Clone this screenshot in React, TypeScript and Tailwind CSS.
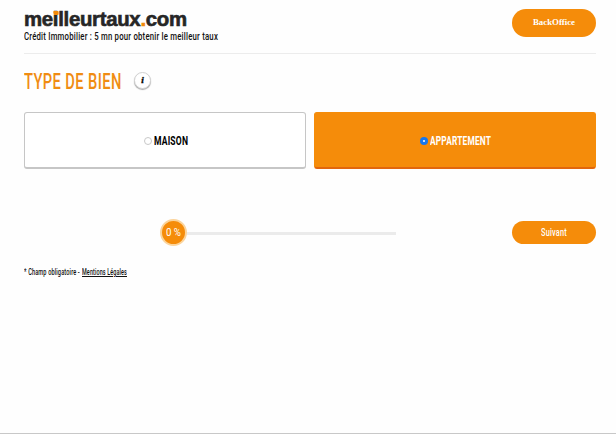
import { useLayoutEffect, useRef, useState, type ReactNode } from "react";

// Squeezes its text horizontally so that it fills the width given by `box`.
function Condensed({ box, text, children }: { box: string; text: string; children: ReactNode }) {
  const outer = useRef<HTMLSpanElement>(null);
  const inner = useRef<HTMLSpanElement>(null);
  const [scale, setScale] = useState(1);
  useLayoutEffect(() => {
    if (outer.current && inner.current) {
      setScale(outer.current.clientWidth / inner.current.offsetWidth);
    }
  }, []);
  return (
    <span ref={outer} className={`block shrink-0 ${box}`}>
      <span
        ref={inner}
        className={`block w-max origin-left whitespace-nowrap ${text}`}
        style={{ transform: `scaleX(${scale})` }}
      >
        {children}
      </span>
    </span>
  );
}

function Header() {
  return (
    <header className="flex h-[54px] items-start justify-between border-b border-[#ececec]">
      <div className="pt-[10px]">
        <Condensed
          box="w-[163px] h-[19px]"
          text="font-['Liberation_Sans',sans-serif] text-[20px] leading-[19px] font-bold tracking-[-0.3px] text-[#262626] [-webkit-text-stroke:0.6px_#262626]"
        >
          me
          <span className="relative inline-block">
            i
            <span className="absolute top-px left-[0.5px] h-[4px] w-[5px] rounded-[1px] bg-[#f28a0a]" />
          </span>
          lleurtaux<span className="text-[#f28a0a] [-webkit-text-stroke:0.6px_#f28a0a]">.</span>com
        </Condensed>
        <Condensed
          box="w-[194px] h-[14px]"
          text="font-[Roboto,sans-serif] text-[11.3px] leading-[15px] font-medium tracking-[0.3px] text-[#111]"
        >
          Crédit Immobilier : 5 mn pour obtenir le meilleur taux
        </Condensed>
      </div>
      <button className="mt-[9px] flex h-[28px] w-[84px] items-center justify-center rounded-full bg-[#f58c0a] font-['Liberation_Serif',serif] text-[8.8px] font-bold text-white">
        BackOffice
      </button>
    </header>
  );
}

function Choice({ label, box, checked }: { label: string; box: string; checked?: boolean }) {
  return (
    <label
      className={`flex h-[57px] items-center justify-center gap-[2px] rounded-[3px] border border-b-2 pt-px pl-px ${
        checked
          ? "border-[#f58c0a] border-b-[#e2660c] bg-[#f58c0a] text-white"
          : "border-[#c6c6c6] bg-white text-black"
      }`}
    >
      <span
        className={`flex size-[8px] items-center justify-center rounded-full ${
          checked ? "bg-[#1677ee]" : "border border-[#c9c9c9] bg-white"
        }`}
      >
        {checked && <span className="size-[2px] rounded-full bg-white" />}
      </span>
      <Condensed
        box={box}
        text="font-[Roboto,sans-serif] text-[12.8px] leading-[16px] font-bold tracking-[0.3px]"
      >
        {label}
      </Condensed>
    </label>
  );
}

export default function App() {
  return (
    <div className="flex h-[434px] w-[616px] flex-col overflow-hidden border-b border-[#c8c8c8] bg-[#fefefe] pr-[20px] pl-[24px]">
      <Header />
      <div className="flex h-[58px] items-center gap-[12px] pb-[5px]">
        <Condensed
          box="w-[98px] pt-[2px]"
          text="font-[Roboto,sans-serif] text-[22.8px] leading-[28px] font-medium tracking-[0.6px] text-[#f08c12]"
        >
          TYPE DE BIEN
        </Condensed>
        <span className="flex size-[17px] items-center justify-center rounded-full border border-[#d2d2d2] bg-white pb-px font-['Liberation_Serif',serif] text-[9px] leading-none font-bold text-black italic shadow-[0_1px_1px_#aaa] [-webkit-text-stroke:0.4px_black]">
          i
        </span>
      </div>
      <div className="grid grid-cols-2 gap-[8px]">
        <Choice label="MAISON" box="w-[34px]" />
        <Choice label="APPARTEMENT" box="w-[61px]" checked />
      </div>
      <div className="mt-[49px] flex h-[29px] items-center justify-between">
        <div className="ml-[136px] flex items-center">
          <span className="flex size-[27px] items-center justify-center rounded-full border-2 border-[#fbd49c] bg-[#f58c0a]">
            <Condensed
              box="w-[15px] pt-px"
              text="font-[Roboto,sans-serif] text-[11px] leading-[14px] text-white"
            >
              0 %
            </Condensed>
          </span>
          <span className="mt-px h-[3px] w-[209px] bg-[#ebebeb]" />
        </div>
        <button className="flex h-[23px] w-[84px] items-center justify-center rounded-full bg-[#f58c0a] pt-px">
          <Condensed
            box="w-[26px]"
            text="font-[Roboto,sans-serif] text-[11px] leading-[14px] font-medium tracking-[0.3px] text-white"
          >
            Suivant
          </Condensed>
        </button>
      </div>
      <footer className="mt-[19px] flex h-[12px] gap-[2px]">
        <Condensed
          box="w-[56px]"
          text="font-[Roboto,sans-serif] text-[8.3px] leading-[13px] font-medium tracking-[0.2px] text-[#111]"
        >
          * Champ obligatoire -
        </Condensed>
        <Condensed
          box="w-[45px]"
          text="font-[Roboto,sans-serif] text-[8.3px] leading-[13px] font-medium tracking-[0.2px] text-[#111] underline"
        >
          Mentions Légales
        </Condensed>
      </footer>
    </div>
  );
}
